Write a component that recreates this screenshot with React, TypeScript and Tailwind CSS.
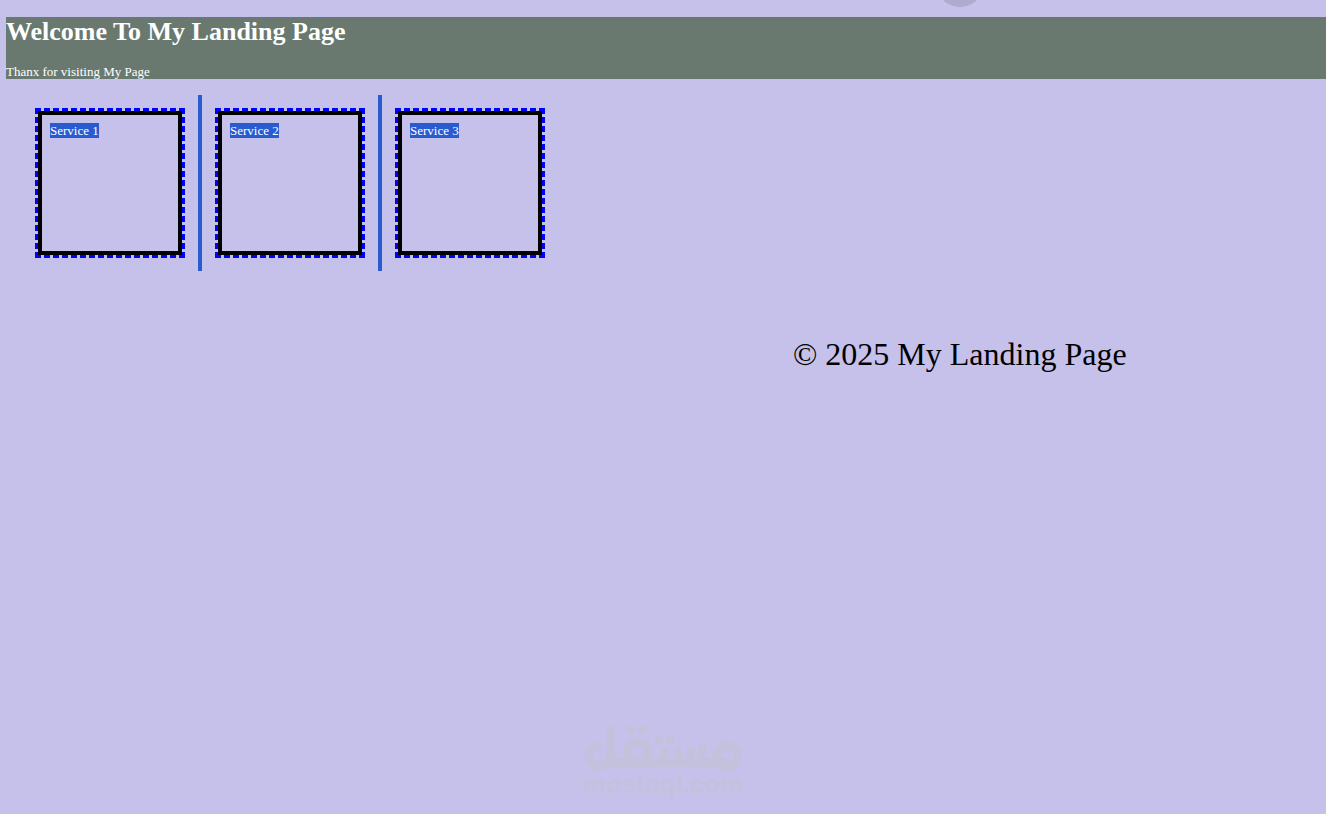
import { Fragment } from "react";

const services = ["Service 1", "Service 2", "Service 3"];

function Watermark() {
  return (
    <div className="pointer-events-none fixed inset-x-0 bottom-[18px] flex flex-col items-center font-['Liberation_Sans',Arial,sans-serif] text-[#c3c1dc]">
      <svg viewBox="66 42 482 144" className="h-12 w-40" fill="none" stroke="currentColor" strokeWidth="26" strokeLinecap="round" role="img" aria-label="مستقل">
        <path d="M112 108A31 31 0 1 0 143 151" />
        <path d="M150 152V57" strokeWidth="23" />
        <path d="M143 158H500" />
        <circle cx="230" cy="126" r="31" />
        <circle cx="500" cy="139" r="32" />
        <path d="M313 126L308 152M354 125L358 152M392 118L387 152M427 111L420 152" strokeWidth="24" />
        <g fill="currentColor" stroke="none">
          <circle cx="211" cy="60" r="14" />
          <circle cx="245" cy="60" r="14" />
          <circle cx="295" cy="89" r="14" />
          <circle cx="329" cy="89" r="14" />
        </g>
      </svg>
      <span className="text-[26px] leading-6 font-bold">mostaql.com</span>
    </div>
  );
}

export default function App() {
  return (
    <div className="relative min-h-screen overflow-hidden bg-[#c6c1ea] pt-[17px] pl-1.5 font-['Liberation_Serif','Times_New_Roman',serif] text-[13px] leading-[15px] text-white">
      <div className="absolute -top-[41px] left-[936px] size-12 rounded-full bg-[#b0aad0]" />
      <header className="bg-[#69796f]">
        <h1 className="pb-[17px] text-[26px] leading-[30px] font-bold">Welcome To My Landing Page</h1>
        <p>Thanx for visiting My Page</p>
      </header>
      <main className="mt-4 flex pl-4">
        {services.map((service, index) => (
          <Fragment key={service}>
            {index > 0 && <div className="w-1 bg-[#285bd0]" />}
            <section className="m-4 size-36 border-4 border-black p-2 outline-3 outline-[#0000ff] outline-dashed">
              <span className="inline-block bg-[#285bd0]">{service}</span>
            </section>
          </Fragment>
        ))}
      </main>
      <footer className="mt-16 ml-[787px] text-[32px] leading-[38px] text-black">© 2025 My Landing Page</footer>
      <Watermark />
    </div>
  );
}
